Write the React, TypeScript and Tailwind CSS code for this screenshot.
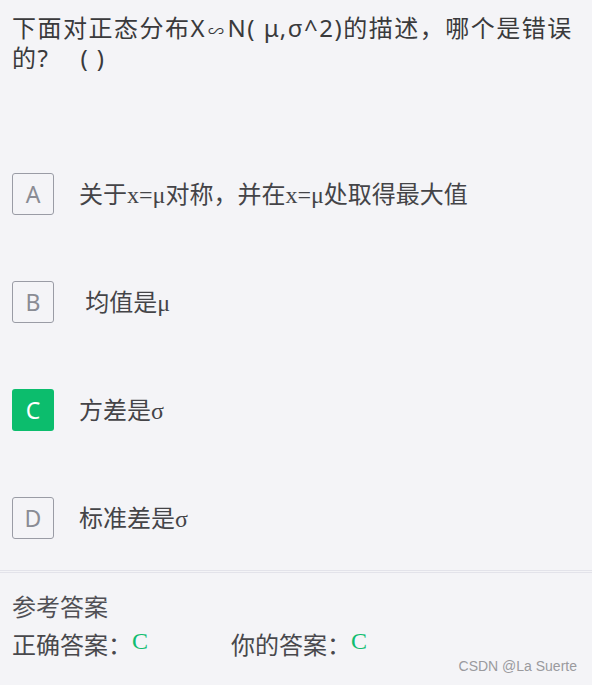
const OPTIONS = [
  { key: "A", text: <>关于<M>x=μ</M>对称，并在<M>x=μ</M>处取得最大值</>, active: false },
  { key: "B", text: <>&nbsp;均值是<M>μ</M></>, active: false },
  { key: "C", text: <>方差是<M>σ</M></>, active: true },
  { key: "D", text: <>标准差是<M>σ</M></>, active: false },
]

function M({ children }: { children: React.ReactNode }) {
  return <span className="font-['Liberation_Serif',serif]">{children}</span>
}

export default function App() {
  return (
    <div className="relative h-[685px] w-[592px] overflow-hidden bg-[#f4f4f7] font-['Noto_Sans','Noto_Sans_CJK_SC',sans-serif] text-[#3a3a3c]">
      <h1 className="px-3 pt-[13px] text-[24px] leading-[30px] tracking-[1.5px]">
        下面对正态分布X<span className="px-[2px] text-[16px] leading-none">∽</span>N( μ,σ^2)的描述，哪个是错误的?&nbsp;&nbsp;&nbsp;&nbsp;( )
      </h1>

      <ul className="mt-[100px] flex flex-col gap-[66px] px-3">
        {OPTIONS.map((o) => (
          <li key={o.key} className="flex items-center gap-[25px]">
            <span
              className={
                o.active
                  ? "flex h-[42px] w-[42px] items-center justify-center rounded-[3px] bg-[#0cbd6d] pt-[1px] text-[23px] text-white"
                  : "flex h-[42px] w-[42px] items-center justify-center rounded-[3px] border border-[#9a9ca5] pt-[1px] text-[23px] text-[#8a8c94]"
              }
            >
              {o.key}
            </span>
            <span className="text-[24px] leading-[30px] text-[#444448]">{o.text}</span>
          </li>
        ))}
      </ul>

      <div className="mt-[31px] border-t-[3px] border-double border-[#e3e3ea] px-3 pt-[19px]">
        <div className="text-[24px] leading-[30px] text-[#505055]">参考答案</div>
        <div className="mt-[8px] flex text-[24px] leading-[30px] text-[#48484c]">
          <span className="w-[219px]">
            正确答案：<span className="relative -top-[5px] font-['Liberation_Serif',serif] text-[24px] text-[#10bd70]">C</span>
          </span>
          <span>
            你的答案：<span className="relative -top-[5px] font-['Liberation_Serif',serif] text-[24px] text-[#10bd70]">C</span>
          </span>
        </div>
      </div>

      <div className="absolute bottom-[8px] right-[15px] font-['Liberation_Sans',sans-serif] text-[14px] text-[#9a9a9e]">
        CSDN @La Suerte
      </div>
    </div>
  )
}
